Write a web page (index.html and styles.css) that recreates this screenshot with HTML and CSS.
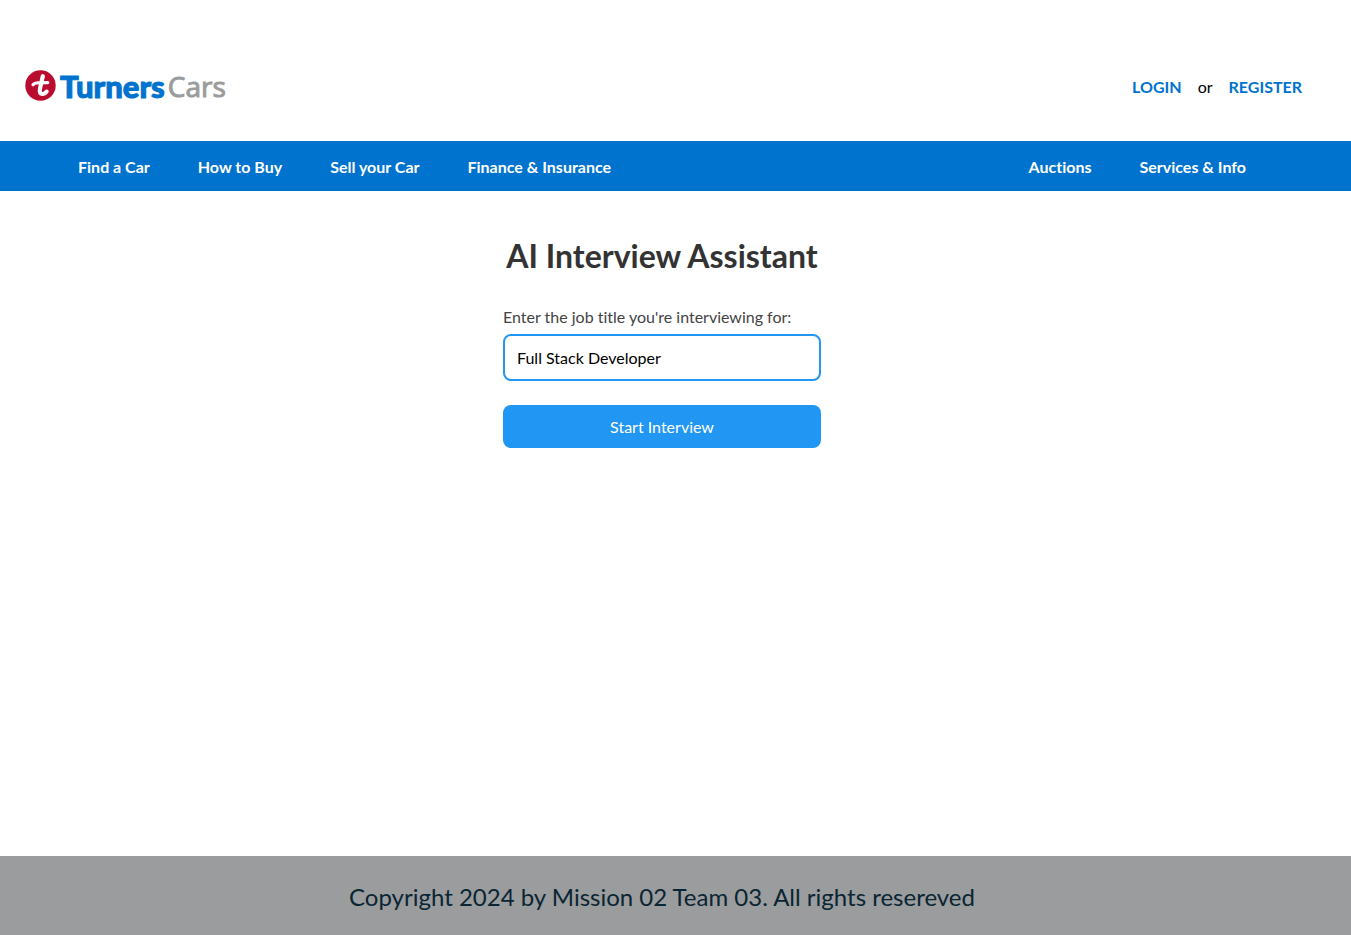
FILE: index.html
```html
<!DOCTYPE html>
<html lang="en">
<head>
<meta charset="utf-8">
<meta name="viewport" content="width=device-width, initial-scale=1">
<title>AI Interview Assistant</title>
<link rel="stylesheet" href="styles.css">
</head>
<body>
<header class="header">
  <a class="logo" href="#" aria-label="Turners Cars">
    <svg class="logo-badge" viewBox="0 0 31 31" aria-hidden="true">
      <circle cx="15.5" cy="15.5" r="15.2" fill="#ba0c2f"/>
      <path d="M17.8 6.2 L15 18.6 Q13.8 24.2 17.8 24 Q20.2 23.7 21.6 21.6" fill="none" stroke="#fff" stroke-width="4.2" stroke-linecap="round" stroke-linejoin="round"/>
      <path d="M8 14.8 Q9.4 12.9 12.4 12.8 L22.8 12.6" fill="none" stroke="#fff" stroke-width="3.2" stroke-linecap="round"/>
    </svg>
    <span class="logo-name">Turners</span>
    <span class="logo-kind">Cars</span>
  </a>
  <div class="account">
    <a href="#">LOGIN</a>
    <span>or</span>
    <a href="#">REGISTER</a>
  </div>
</header>
<nav class="nav">
  <div class="nav-group">
    <a href="#">Find a Car</a>
    <a href="#">How to Buy</a>
    <a href="#">Sell your Car</a>
    <a href="#">Finance &amp; Insurance</a>
  </div>
  <div class="nav-group">
    <a href="#">Auctions</a>
    <a href="#">Services &amp; Info</a>
  </div>
</nav>
<main class="main">
  <form class="interview">
    <h1>AI Interview Assistant</h1>
    <label for="job">Enter the job title you're interviewing for:</label>
    <input id="job" type="text" value="Full Stack Developer" size="1">
    <button type="button">Start Interview</button>
  </form>
</main>
<footer class="footer">
  <p>Copyright 2024 by Mission 02 Team 03. All rights resereved</p>
</footer>
</body>
</html>
```
FILE: styles.css
```css
* {
  box-sizing: border-box;
}

body {
  display: flex;
  flex-direction: column;
  min-height: 100vh;
  margin: 0;
  background: #fff;
  color: #000;
  font-family: Lato, "Liberation Sans", sans-serif;
  font-size: 16px;
  font-variant-ligatures: none;
  line-height: 20px;
}

a {
  text-decoration: none;
}

.header {
  display: flex;
  align-items: center;
  justify-content: space-between;
  padding: 64px 49px 32px 25px;
}

.logo {
  display: flex;
  align-items: center;
  height: 45px;
  padding-bottom: 2px;
  font-size: 31px;
}

.logo-badge {
  width: 31px;
  height: 31px;
  margin-right: 4px;
}

.logo-name {
  color: #0073cf;
  font-weight: 900;
  -webkit-text-stroke: 1px #0073cf;
}

.logo-kind {
  margin-left: 3px;
  color: #9b9c9d;
  font-family: "Open Sans", sans-serif;
  font-size: 28px;
  font-weight: 500;
  -webkit-text-stroke: 1px #9b9c9d;
}

.account {
  display: flex;
  gap: 16px;
}

.account a {
  color: #0073cf;
  font-weight: 700;
}

.nav {
  display: flex;
  justify-content: space-between;
  padding: 16px 105px 14px 78px;
  background: #0073cf;
}

.nav-group {
  display: flex;
  gap: 48px;
}

.nav a {
  color: #fff;
  font-weight: 700;
}

.main {
  display: flex;
  flex: 1;
  justify-content: center;
  padding: 45px 27px 32px 0;
}

.interview {
  display: flex;
  flex-direction: column;
  min-width: 318px;
}

.interview h1 {
  margin: 0 0 31px;
  color: #333;
  font-size: 32px;
  font-weight: 700;
  line-height: 40px;
  text-align: center;
}

.interview label {
  margin-bottom: 7px;
  color: #444;
}

.interview input {
  width: 100%;
  height: 47px;
  margin-bottom: 24px;
  padding: 0 12px;
  border: 2px solid #2196f3;
  border-radius: 8px;
  outline: none;
  background: #fff;
  color: #000;
  font: inherit;
}

.interview button {
  padding: 12px 24px 11px;
  border: 0;
  border-radius: 8px;
  background: #2196f3;
  color: #fff;
  font: inherit;
}

.footer {
  padding: 25px 27px 22px 0;
  background: #9b9c9d;
  color: #0a2533;
  font-size: 24px;
  line-height: 32px;
  text-align: center;
}

.footer p {
  margin: 0;
}
```
